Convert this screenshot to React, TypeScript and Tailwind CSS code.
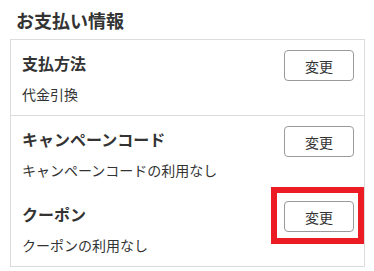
import React from "react";

const font = { fontFamily: '"Noto Sans CJK JP", "Noto Sans", sans-serif' };

const sections = [
  { title: "支払方法", value: "代金引換", divider: true, marked: false },
  { title: "キャンペーンコード", value: "キャンペーンコードの利用なし", divider: false, marked: false },
  { title: "クーポン", value: "クーポンの利用なし", divider: false, marked: true },
];

export default function App() {
  return (
    <div className="w-[374px] h-[271px] bg-white px-[10px] pt-2 text-[#333]" style={font}>
      <h2 className="ml-1.5 text-[18px] leading-6 font-bold">お支払い情報</h2>
      <div className="mt-[7px] w-[355px] border border-[#dcdcdc]">
        {sections.map((s) => (
          <section
            key={s.title}
            className={`flex items-start justify-between pl-[11px] pr-[10px] pt-[10px] ${
              s.divider ? "h-[76px] border-b border-[#dcdcdc]" : "h-[75px]"
            }`}
          >
            <div className="pt-px">
              <h3 className="text-base leading-6 font-bold">{s.title}</h3>
              <p className="mt-[9px] text-sm leading-5">{s.value}</p>
            </div>
            <div className="relative">
              <button className="h-[31px] w-[70px] rounded-[4px] border border-[#9a9a9a] bg-white text-sm leading-5 text-[#333]">
                変更
              </button>
              {s.marked && (
                <div className="pointer-events-none absolute -left-[13px] -top-[14px] h-[57px] w-[93px] border-[6px] border-[#ec1c24]" />
              )}
            </div>
          </section>
        ))}
      </div>
    </div>
  );
}
